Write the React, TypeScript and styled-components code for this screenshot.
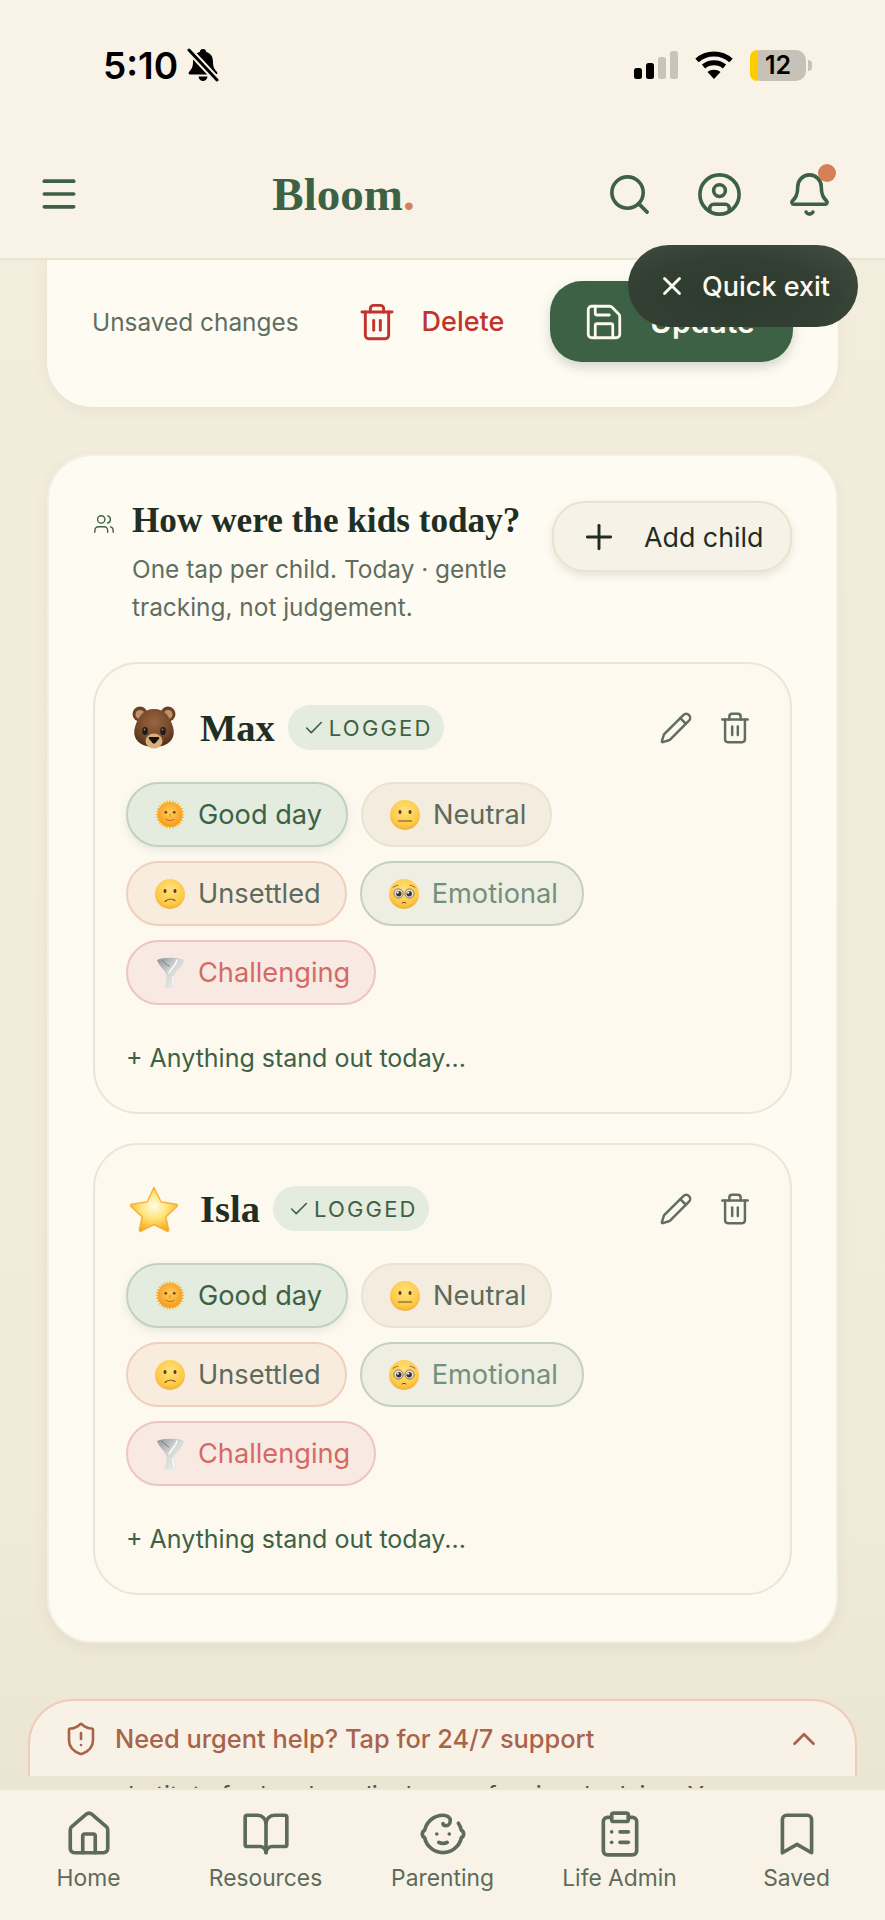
import React from "react";
import styled, { createGlobalStyle } from "styled-components";
import {
	Baby,
	Bell,
	BookOpen,
	Bookmark,
	Check,
	ChevronUp,
	CircleUser,
	ClipboardList,
	House,
	Menu,
	Pencil,
	Plus,
	Save,
	Search,
	ShieldAlert,
	Trash2,
	Users,
	X,
} from "lucide-react";

const GlobalStyle = createGlobalStyle`
	* {
		box-sizing: border-box;
	}

	html,
	body {
		margin: 0;
		padding: 0;
		background: #f2ecdc;
		font-family: "Inter", "Liberation Sans", sans-serif;
	}
`;

const BellSlashGlyph = () => (
	<svg width="32" height="34" viewBox="0 0 32 34">
		<path
			d="M16 1c2 0 3 1.300 3.200 3 4.800 1.300 6.800 5 6.800 10 0 5 1.500 7.500 4 10 .8 1 .3 2.500-1.200 2.500H3.200C1.700 26.500 1.200 25 2 24c2.500-2.500 4-5 4-10 0-5 2-8.700 6.800-10C13 2.300 14 1 16 1z"
			fill="#000"
		/>
		<path d="M11.500 28.500h9c-.3 2.800-2.200 4.500-4.500 4.500s-4.200-1.700-4.500-4.500z" fill="#000" />
		<path d="M2 2l28 30" stroke="#f9f3e7" strokeWidth="7" />
		<path d="M2 2l28 30" stroke="#000" strokeWidth="3" strokeLinecap="round" />
	</svg>
);

const SignalGlyph = () => (
	<svg width="44" height="28" viewBox="0 0 44 28">
		<rect x="0" y="17" width="8" height="11" rx="2.500" fill="#000" />
		<rect x="12" y="12" width="8" height="16" rx="2.500" fill="#000" />
		<rect x="24" y="6" width="8" height="22" rx="2.500" fill="#c8c4b9" />
		<rect x="36" y="0" width="8" height="28" rx="2.500" fill="#c8c4b9" />
	</svg>
);

const WifiGlyph = () => (
	<svg width="38" height="28" viewBox="0 0 38 28" fill="none" stroke="#000" strokeWidth="5">
		<path d="M2 9.500C11.500 .8 26.500 .8 36 9.500" />
		<path d="M8.500 15.500c6-5 15-5 21 0" />
		<path d="M19 28l-6.500-7c3.700-3 9.300-3 13 0z" fill="#000" stroke="none" />
	</svg>
);

const BearEmoji = () => (
	<svg width="46" height="44" viewBox="0 0 46 44">
		<defs>
			<radialGradient id="bearHead" cx="50%" cy="35%" r="65%">
				<stop offset="0%" stopColor="#9a6440" />
				<stop offset="75%" stopColor="#6f4426" />
				<stop offset="100%" stopColor="#4f2f19" />
			</radialGradient>
		</defs>
		<circle cx="9" cy="8" r="7.500" fill="#6b4226" />
		<circle cx="37" cy="8" r="7.500" fill="#6b4226" />
		<circle cx="9" cy="8.500" r="4.500" fill="#c2906a" />
		<circle cx="37" cy="8.500" r="4.500" fill="#c2906a" />
		<path d="M23 3C34 3 39 11 42 21c3 10-3 17-11 19-4 1-12 1-16 0C7 38 1 31 4 21 7 11 12 3 23 3z" fill="url(#bearHead)" />
		<ellipse cx="23" cy="35" rx="8.500" ry="7.500" fill="#d9ad7c" />
		<ellipse cx="14" cy="25" rx="2.800" ry="4" fill="#1c1a1c" />
		<ellipse cx="32" cy="25" rx="2.800" ry="4" fill="#1c1a1c" />
		<circle cx="13.500" cy="23.500" r=".9" fill="#8b8b90" />
		<circle cx="31.500" cy="23.500" r=".9" fill="#8b8b90" />
		<path d="M18.500 31h9c.8 0 1 1 .5 1.700L24.500 37c-.8.8-2.200.8-3 0L18 32.700c-.5-.7-.3-1.700.5-1.700z" fill="#17140f" />
	</svg>
);

const StarEmoji = () => (
	<svg width="50" height="48" viewBox="0 0 50 48">
		<defs>
			<radialGradient id="starFill" cx="50%" cy="42%" r="62%">
				<stop offset="0%" stopColor="#fffce6" />
				<stop offset="45%" stopColor="#ffe680" />
				<stop offset="100%" stopColor="#f8a60c" />
			</radialGradient>
		</defs>
		<path
			d="M25 2.500l7 14.500 15.500 2.200c1 .2 1.300 1.300.6 2L36.800 32l2.800 13c.2 1-.8 1.700-1.700 1.200L25 39.500l-12.900 6.700c-.9.500-1.900-.2-1.700-1.200l2.800-13L1.900 21.200c-.7-.7-.4-1.800.6-2L18 17l7-14.500z"
			fill="url(#starFill)"
			stroke="#f7b23b"
			strokeWidth="1.500"
			strokeLinejoin="round"
		/>
	</svg>
);

const SunEmoji = () => (
	<svg width="31" height="31" viewBox="0 0 30 30">
		<defs>
			<radialGradient id="sunFace" cx="50%" cy="42%" r="58%">
				<stop offset="0%" stopColor="#ffcf5c" />
				<stop offset="100%" stopColor="#f59a1f" />
			</radialGradient>
		</defs>
		{Array.from({ length: 28 }, (_, i) => (
			<path key={i} d="M15 0l1.300 3.500h-2.600z" fill="#fbb622" transform={`rotate(${(i * 360) / 28} 15 15)`} />
		))}
		<circle cx="15" cy="15" r="12.200" fill="url(#sunFace)" />
		<circle cx="10.800" cy="12.800" r="1.400" fill="#6e4a22" />
		<circle cx="19.200" cy="12.800" r="1.400" fill="#6e4a22" />
		<path d="M15 14.500v2.500" stroke="#d57b14" strokeWidth=".9" strokeLinecap="round" />
		<path d="M11 19.800c2.300 1.700 5.700 1.700 8 0" fill="none" stroke="#b96a12" strokeWidth=".9" strokeLinecap="round" />
	</svg>
);

const FaceBase = ({ children }: { children: React.ReactNode }) => (
	<svg width="30" height="30" viewBox="0 0 30 30">
		<defs>
			<radialGradient id="faceFill" cx="50%" cy="35%" r="70%">
				<stop offset="0%" stopColor="#ffe27a" />
				<stop offset="70%" stopColor="#fdc948" />
				<stop offset="100%" stopColor="#f3a526" />
			</radialGradient>
		</defs>
		<circle cx="15" cy="15" r="15" fill="url(#faceFill)" />
		{children}
	</svg>
);

const NeutralEmoji = () => (
	<FaceBase>
		<ellipse cx="10" cy="12" rx="1.500" ry="2" fill="#5b3a1a" />
		<ellipse cx="20" cy="12" rx="1.500" ry="2" fill="#5b3a1a" />
		<path d="M8.500 21h13" stroke="#6b4a22" strokeWidth="1.200" strokeLinecap="round" />
	</FaceBase>
);

const FrownEmoji = () => (
	<FaceBase>
		<ellipse cx="10" cy="12" rx="1.500" ry="2" fill="#5b3a1a" />
		<ellipse cx="20" cy="12" rx="1.500" ry="2" fill="#5b3a1a" />
		<path d="M10 22.500c2.800-2.600 7-3 10-1" fill="none" stroke="#6b4a22" strokeWidth="1.100" strokeLinecap="round" />
	</FaceBase>
);

const PleadingEmoji = () => (
	<FaceBase>
		<path d="M4 8.500c1.500-1.300 3-2 5-2.200M26 8.500c-1.500-1.300-3-2-5-2.200" fill="none" stroke="#8a5a20" strokeWidth=".9" strokeLinecap="round" />
		<circle cx="9.500" cy="14.500" r="4.600" fill="#dfe2e8" stroke="#6a4a2c" strokeWidth=".7" />
		<circle cx="20.500" cy="14.500" r="4.600" fill="#dfe2e8" stroke="#6a4a2c" strokeWidth=".7" />
		<circle cx="9.800" cy="14.800" r="2.700" fill="#3f3029" />
		<circle cx="20.200" cy="14.800" r="2.700" fill="#3f3029" />
		<circle cx="8.800" cy="13.600" r="1.100" fill="#fff" />
		<circle cx="19.200" cy="13.600" r="1.100" fill="#fff" />
		<path d="M13 24c1.300-.8 2.700-.8 4 0" fill="none" stroke="#6b4a22" strokeWidth="1" strokeLinecap="round" />
	</FaceBase>
);

const TornadoEmoji = () => (
	<svg width="30" height="32" viewBox="0 0 30 32">
		<defs>
			<linearGradient id="tornadoFill" x1="0" y1="0" x2="1" y2="1">
				<stop offset="0%" stopColor="#8c8f91" />
				<stop offset="45%" stopColor="#d4d5d6" />
				<stop offset="100%" stopColor="#f6f5f1" />
			</linearGradient>
		</defs>
		<path
			d="M2 3C8 0 24 0 29 3c-1 6-6 10-9 13-2 3 0 8 2 14-4 2-11 2-13 0 3-4 3-9 2-13C9 12 4 9 2 3z"
			fill="url(#tornadoFill)"
		/>
		<path d="M22 3c-1 5-6 9-8 13M18 20c0 3 0 5 1 8" fill="none" stroke="#fbfbf8" strokeWidth="1.500" strokeLinecap="round" />
		<path d="M7 3c2 3 5 5 7 6" fill="none" stroke="#777a7c" strokeWidth="1" strokeLinecap="round" />
	</svg>
);

const moods = [
	{ kind: "good", label: "Good day", emoji: <SunEmoji /> },
	{ kind: "neutral", label: "Neutral", emoji: <NeutralEmoji /> },
	{ kind: "unsettled", label: "Unsettled", emoji: <FrownEmoji /> },
	{ kind: "emotional", label: "Emotional", emoji: <PleadingEmoji /> },
	{ kind: "challenging", label: "Challenging", emoji: <TornadoEmoji /> },
];

const children = [
	{ name: "Max", avatar: <BearEmoji /> },
	{ name: "Isla", avatar: <StarEmoji /> },
];

const navItems = [
	{ label: "Home", icon: House },
	{ label: "Resources", icon: BookOpen },
	{ label: "Parenting", icon: Baby },
	{ label: "Life Admin", icon: ClipboardList },
	{ label: "Saved", icon: Bookmark },
];

const App = () => {
	return (
		<Shell>
			<GlobalStyle />
			<Header>
				<StatusBar>
					<StatusLeft>
						<Time>5:10</Time>
						<BellSlashGlyph />
					</StatusLeft>
					<StatusRight>
						<SignalGlyph />
						<WifiGlyph />
						<Battery>
							<BatteryLevel />
							<BatteryText>12</BatteryText>
						</Battery>
					</StatusRight>
				</StatusBar>
				<TopBar>
					<Menu size={44} strokeWidth={2} />
					<Logo>
						Bloom<LogoDot>.</LogoDot>
					</Logo>
					<TopActions>
						<Search size={47} strokeWidth={1.85} />
						<CircleUser size={47} strokeWidth={1.85} />
						<BellWrap>
							<Bell size={47} strokeWidth={1.85} />
							<BellBadge />
						</BellWrap>
					</TopActions>
				</TopBar>
			</Header>

			<Main>
				<SaveCard>
					<UnsavedText>Unsaved changes</UnsavedText>
					<DeleteButton>
						<Trash2 size={40} strokeWidth={1.75} />
						Delete
					</DeleteButton>
					<UpdateButton>
						<Save size={42} strokeWidth={1.6} />
						Update
					</UpdateButton>
				</SaveCard>

				<KidsCard>
					<KidsHead>
						<KidsIcon>
							<Users size={22} strokeWidth={1.5} />
						</KidsIcon>
						<KidsText>
							<KidsTitle>How were the kids today?</KidsTitle>
							<KidsSub>One tap per child. Today · gentle tracking, not judgement.</KidsSub>
						</KidsText>
						<AddButton>
							<Plus size={40} strokeWidth={1.75} />
							Add child
						</AddButton>
					</KidsHead>

					{children.map((child) => (
						<ChildCard key={child.name}>
							<ChildRow>
								<Avatar>{child.avatar}</Avatar>
								<ChildName>{child.name}</ChildName>
								<LoggedBadge>
									<Check size={22} strokeWidth={1.75} />
									LOGGED
								</LoggedBadge>
								<ChildActions>
									<Pencil size={34} strokeWidth={1.75} />
									<Trash2 size={34} strokeWidth={1.75} />
								</ChildActions>
							</ChildRow>
							<Moods>
								{moods.map((mood) => (
									<MoodPill key={mood.label} $kind={mood.kind}>
										<MoodEmoji>{mood.emoji}</MoodEmoji>
										{mood.label}
									</MoodPill>
								))}
							</Moods>
							<NoteLink>+ Anything stand out today...</NoteLink>
						</ChildCard>
					))}
				</KidsCard>

				<Disclaimer>
					Bloom shares general information and ideas to support
					<br />
					you and your family. It should not be used
					<br />
					as a substitute for local medical or professional advice. You
				</Disclaimer>

				<HelpPanel>
					<ShieldAlert size={36} strokeWidth={1.75} />
					<HelpText>Need urgent help? Tap for 24/7 support</HelpText>
					<ChevronUp size={38} strokeWidth={1.75} />
				</HelpPanel>
			</Main>

			<BottomNav>
				{navItems.map((item) => (
					<NavItem key={item.label}>
						<item.icon size={50} strokeWidth={1.75} />
						<NavLabel>{item.label}</NavLabel>
					</NavItem>
				))}
			</BottomNav>

			<QuickExit>
				<X size={30} strokeWidth={2.25} />
				Quick exit
			</QuickExit>
		</Shell>
	);
};

export default App;

const Shell = styled.div`
	position: relative;
	display: flex;
	flex-direction: column;
	width: 885px;
	height: 1920px;
	overflow: hidden;
	background: #f2ecdc;
`;

const Header = styled.header`
	flex: none;
	height: 260px;
	background: #f9f3e7;
	border-bottom: 2px solid #e9e3d3;
	position: relative;
	z-index: 2;
`;

const StatusBar = styled.div`
	display: flex;
	align-items: center;
	justify-content: space-between;
	height: 130px;
	padding: 0 79px 0 103px;
`;

const StatusLeft = styled.div`
	display: flex;
	align-items: center;
	gap: 9px;
`;

const Time = styled.span`
	font-size: 37px;
	font-weight: 600;
	color: #000;
`;

const StatusRight = styled.div`
	display: flex;
	align-items: center;
	gap: 17px;
`;

const Battery = styled.div`
	position: relative;
	display: flex;
	align-items: center;
	justify-content: center;
	width: 56px;
	height: 31px;
	border-radius: 10px;
	background: #c6c2b8;
	overflow: visible;

	&::after {
		content: "";
		position: absolute;
		right: -6px;
		top: 10px;
		width: 4px;
		height: 11px;
		border-radius: 0 4px 4px 0;
		background: #c6c2b8;
	}
`;

const BatteryLevel = styled.span`
	position: absolute;
	left: 0;
	top: 0;
	bottom: 0;
	width: 7px;
	border-radius: 10px 0 0 10px;
	background: #ffcc00;
`;

const BatteryText = styled.span`
	position: relative;
	font-size: 25px;
	font-weight: 600;
	color: #000;
`;

const TopBar = styled.div`
	display: flex;
	align-items: center;
	justify-content: space-between;
	height: 128px;
	padding: 0 52px 0 37px;
	color: #3d6145;
`;

const Logo = styled.div`
	font-family: "Liberation Serif", serif;
	font-size: 47px;
	font-weight: 700;
	color: #3d6145;
`;

const LogoDot = styled.span`
	color: #d67f58;
`;

const TopActions = styled.div`
	display: flex;
	align-items: center;
	gap: 43px;
`;

const BellWrap = styled.div`
	position: relative;
	display: flex;
`;

const BellBadge = styled.span`
	position: absolute;
	top: -7px;
	right: -3px;
	width: 18px;
	height: 18px;
	border-radius: 50%;
	background: #d67f58;
`;

const Main = styled.main`
	position: relative;
	flex: 1;
	min-height: 0;
	overflow: hidden;
	padding: 0 47px;
	background: linear-gradient(180deg, #f3eddd 0%, #f1ebda 80%, #ebe5d3 100%);
`;

const SaveCard = styled.section`
	display: flex;
	align-items: center;
	margin-top: -40px;
	padding: 61px 45px 45px;
	height: 187px;
	border-radius: 45px;
	background: #fefbf3;
	box-shadow: 0 4px 14px rgba(120, 105, 70, 0.08);
`;

const UnsavedText = styled.span`
	font-size: 24.4px;
	color: #5f6e60;
`;

const DeleteButton = styled.div`
	display: flex;
	align-items: center;
	gap: 25px;
	margin-left: 58px;
	font-size: 27px;
	font-weight: 500;
	color: #c0342c;
`;

const UpdateButton = styled.div`
	display: flex;
	align-items: center;
	gap: 25px;
	width: 243px;
	height: 81px;
	margin-left: auto;
	padding-left: 33px;
	border-radius: 32px;
	background: #3d6145;
	color: #fdf9ef;
	font-size: 30px;
	font-weight: 600;
	box-shadow: 0 5px 12px rgba(60, 80, 60, 0.22);
`;

const KidsCard = styled.section`
	margin-top: 47px;
	padding: 45px 44px 46px;
	border: 2px solid #f3efe2;
	border-radius: 45px;
	background: #fefbf3;
	box-shadow: 0 4px 14px rgba(120, 105, 70, 0.08);
`;

const KidsHead = styled.div`
	display: flex;
	align-items: flex-start;
`;

const KidsIcon = styled.div`
	display: flex;
	flex: none;
	width: 39px;
	margin-top: 12px;
	color: #3d6145;
`;

const KidsText = styled.div`
	flex: 1;
	min-width: 0;
`;

const KidsTitle = styled.h2`
	margin: 0;
	font-family: "Liberation Serif", serif;
	font-size: 35.2px;
	line-height: 40px;
	font-weight: 700;
	color: #1f2f24;
	white-space: nowrap;
`;

const KidsSub = styled.p`
	margin: 9px 0 0;
	width: 400px;
	font-size: 24.4px;
	line-height: 38px;
	color: #5f6e60;
`;

const AddButton = styled.div`
	display: flex;
	flex: none;
	align-items: center;
	gap: 25px;
	width: 240px;
	height: 71px;
	padding-left: 25px;
	border: 2px solid #e9e3d0;
	border-radius: 33px;
	background: #f7f2e7;
	color: #1f2d23;
	font-size: 26.8px;
	font-weight: 400;
	box-shadow: 0 4px 8px rgba(120, 105, 70, 0.16);
`;

const ChildCard = styled.article`
	margin-top: 29px;
	padding: 41px 31px 37px;
	border: 2px solid #ebe6d5;
	border-radius: 45px;
	background: #fdf9ef;

	${KidsHead} + & {
		margin-top: 36px;
	}
`;

const ChildRow = styled.div`
	display: flex;
	align-items: center;
	height: 45px;
`;

const Avatar = styled.div`
	display: flex;
	flex: none;
	justify-content: center;
	width: 56px;
	margin-right: 18px;
`;

const ChildName = styled.span`
	font-family: "Liberation Serif", serif;
	font-size: 38.5px;
	font-weight: 700;
	color: #1f2f24;
`;

const LoggedBadge = styled.div`
	display: flex;
	align-items: center;
	gap: 4px;
	height: 45px;
	margin-left: 13px;
	padding: 0 11px 0 15px;
	border-radius: 23px;
	background: #e3ecdf;
	color: #3d6145;
	font-size: 22px;
	font-weight: 400;
	letter-spacing: 2.200px;
`;

const ChildActions = styled.div`
	display: flex;
	align-items: center;
	gap: 25px;
	margin-left: auto;
	margin-right: 7px;
	color: #5f6e60;
`;

const Moods = styled.div`
	display: flex;
	flex-wrap: wrap;
	gap: 14px 13px;
	margin-top: 32px;
`;

const moodColors: Record<string, { bg: string; line: string; text: string }> = {
	good: { bg: "#e3ecdf", line: "#bfd3bf", text: "#3d6145" },
	neutral: { bg: "#f3ecdf", line: "#e9e3d4", text: "#5c6b5c" },
	unsettled: { bg: "#f8ecdf", line: "#f0cfbd", text: "#5c6b5c" },
	emotional: { bg: "#eeeee2", line: "#c5d1c0", text: "#72907a" },
	challenging: { bg: "#f8eae2", line: "#eec6bd", text: "#d46a63" },
};

const MoodPill = styled.div<{ $kind: string }>`
	display: flex;
	align-items: center;
	gap: 13px;
	height: 65px;
	padding: 0 24px 0 27px;
	border: 2px solid ${(props) => moodColors[props.$kind].line};
	border-radius: 33px;
	background: ${(props) => moodColors[props.$kind].bg};
	color: ${(props) => moodColors[props.$kind].text};
	font-size: 27.2px;
	box-shadow: ${(props) => (props.$kind === "good" ? "0 3px 8px rgba(70, 100, 70, 0.12)" : "none")};
`;

const MoodEmoji = styled.span`
	display: flex;
	flex: none;
	width: 30px;
	justify-content: center;
`;

const NoteLink = styled.div`
	margin-top: 36px;
	font-size: 25px;
	line-height: 34px;
	font-weight: 400;
	color: #3d6145;
`;

const Disclaimer = styled.p`
	margin: 55px 0 0;
	font-size: 24.4px;
	line-height: 39px;
	color: #4b5a4e;
	white-space: nowrap;
`;

const HelpPanel = styled.div`
	position: absolute;
	left: 28px;
	right: 28px;
	bottom: 12px;
	display: flex;
	align-items: center;
	height: 77px;
	padding: 0 32px 0 33px;
	border: 2px solid #f0cbb8;
	border-bottom: 0;
	border-radius: 45px 45px 0 0;
	background: #f8f2e6;
	color: #a9634b;
`;

const HelpText = styled.span`
	flex: 1;
	margin-left: 16px;
	font-size: 25.4px;
	font-weight: 500;
`;

const BottomNav = styled.nav`
	display: grid;
	flex: none;
	grid-template-columns: repeat(5, 1fr);
	height: 132px;
	padding-top: 19px;
	border-top: 2px solid #ebe5d4;
	background: #f9f3e7;
	color: #5c6b5c;
`;

const NavItem = styled.div`
	display: flex;
	flex-direction: column;
	align-items: center;
	gap: 4px;
`;

const NavLabel = styled.span`
	font-size: 22.8px;
	line-height: 30px;
	font-weight: 400;
`;

const QuickExit = styled.div`
	position: absolute;
	top: 245px;
	right: 27px;
	z-index: 3;
	display: flex;
	align-items: center;
	gap: 15px;
	width: 230px;
	height: 82px;
	padding-left: 29px;
	border-radius: 41px;
	background: radial-gradient(ellipse at 45% 65%, #2d3a2e 0%, #333f33 55%, #465046 100%);
	color: #fdfaf2;
	font-size: 27px;
	font-weight: 500;
`;
